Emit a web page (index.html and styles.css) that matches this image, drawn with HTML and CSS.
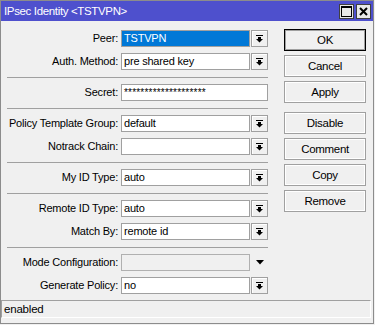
FILE: index.html
```
<!DOCTYPE html>
<html>
<head>
<meta charset="utf-8">
<link rel="stylesheet" href="styles.css">
</head>
<body>
<div class="window">
  <div class="titlebar">
    <span class="title">IPsec Identity &lt;TSTVPN&gt;</span>
    <div class="tb-buttons">
      <span class="tb-btn"><svg width="11" height="11" viewBox="0 0 11 11"><rect x="0.5" y="0.5" width="10" height="10" fill="none" stroke="#000"/><rect x="0" y="0" width="11" height="2" fill="#000"/></svg></span>
      <span class="tb-btn"><svg width="9" height="9" viewBox="0 0 9 9"><path d="M1 1L8 8M8 1L1 8" stroke="#000" stroke-width="2"/></svg></span>
    </div>
  </div>
  <div class="content">
    <div class="form">
      <div class="group">
        <div class="row"><span class="label">Peer:</span><span class="field selected">TSTVPN</span><span class="dd"><svg width="7" height="8" viewBox="0 0 7 8"><rect x="0" y="0" width="7" height="1"/><rect x="2" y="2" width="3" height="2"/><polygon points="0,4 7,4 3.5,7.5"/></svg></span></div>
        <div class="row"><span class="label">Auth. Method:</span><span class="field">pre shared key</span><span class="dd"><svg width="7" height="8" viewBox="0 0 7 8"><rect x="0" y="0" width="7" height="1"/><rect x="2" y="2" width="3" height="2"/><polygon points="0,4 7,4 3.5,7.5"/></svg></span></div>
      </div>
      <div class="sep"></div>
      <div class="group">
        <div class="row"><span class="label">Secret:</span><span class="field wide secret">********************</span></div>
      </div>
      <div class="sep"></div>
      <div class="group">
        <div class="row"><span class="label">Policy Template Group:</span><span class="field">default</span><span class="dd"><svg width="7" height="8" viewBox="0 0 7 8"><rect x="0" y="0" width="7" height="1"/><rect x="2" y="2" width="3" height="2"/><polygon points="0,4 7,4 3.5,7.5"/></svg></span></div>
        <div class="row"><span class="label">Notrack Chain:</span><span class="field"></span><span class="dd"><svg width="7" height="8" viewBox="0 0 7 8"><rect x="0" y="0" width="7" height="1"/><rect x="2" y="2" width="3" height="2"/><polygon points="0,4 7,4 3.5,7.5"/></svg></span></div>
      </div>
      <div class="sep"></div>
      <div class="group">
        <div class="row"><span class="label">My ID Type:</span><span class="field">auto</span><span class="dd"><svg width="7" height="8" viewBox="0 0 7 8"><rect x="0" y="0" width="7" height="1"/><rect x="2" y="2" width="3" height="2"/><polygon points="0,4 7,4 3.5,7.5"/></svg></span></div>
      </div>
      <div class="sep"></div>
      <div class="group">
        <div class="row"><span class="label">Remote ID Type:</span><span class="field">auto</span><span class="dd"><svg width="7" height="8" viewBox="0 0 7 8"><rect x="0" y="0" width="7" height="1"/><rect x="2" y="2" width="3" height="2"/><polygon points="0,4 7,4 3.5,7.5"/></svg></span></div>
        <div class="row"><span class="label">Match By:</span><span class="field">remote id</span><span class="dd"><svg width="7" height="8" viewBox="0 0 7 8"><rect x="0" y="0" width="7" height="1"/><rect x="2" y="2" width="3" height="2"/><polygon points="0,4 7,4 3.5,7.5"/></svg></span></div>
      </div>
      <div class="sep"></div>
      <div class="group">
        <div class="row"><span class="label">Mode Configuration:</span><span class="field disabled"></span><span class="dd plain"><svg width="8" height="5" viewBox="0 0 8 5"><polygon points="0,0 8,0 4,4.5"/></svg></span></div>
        <div class="row"><span class="label">Generate Policy:</span><span class="field">no</span><span class="dd"><svg width="7" height="8" viewBox="0 0 7 8"><rect x="0" y="0" width="7" height="1"/><rect x="2" y="2" width="3" height="2"/><polygon points="0,4 7,4 3.5,7.5"/></svg></span></div>
      </div>
    </div>
    <div class="buttons">
      <button class="btn default">OK</button>
      <button class="btn">Cancel</button>
      <button class="btn">Apply</button>
      <button class="btn spaced">Disable</button>
      <button class="btn">Comment</button>
      <button class="btn">Copy</button>
      <button class="btn">Remove</button>
    </div>
  </div>
  <div class="status">enabled</div>
</div>
</body>
</html>
```

FILE: styles.css
```
* { box-sizing: border-box; }
body {
  margin: 0;
  background: #f0f0f0;
  font-family: "Liberation Sans", Arial, sans-serif;
  font-size: 11px;
  letter-spacing: -0.2px;
  color: #000;
}
.window {
  width: 374px;
  height: 324px;
  border: 1px solid #8c8c8c;
  display: flex;
  flex-direction: column;
  background: #f0f0f0;
}
.titlebar {
  height: 20px;
  background: #4e50cd;
  color: #fff;
  display: flex;
  align-items: center;
  justify-content: space-between;
  padding: 0 2px 0 3px;
}
.title { font-size: 11.5px; letter-spacing: -0.35px; }
.tb-buttons { display: flex; gap: 2px; }
.tb-btn {
  width: 15px;
  height: 15px;
  background: #e8e8e8;
  border: 1px solid #404040;
  display: flex;
  align-items: center;
  justify-content: center;
}
.content {
  display: flex;
  align-items: flex-start;
}
.form {
  width: 267px;
  padding: 9px 0 0 6px;
}
.group {
  display: flex;
  flex-direction: column;
  gap: 6px;
}
.sep {
  height: 1px;
  background: #a0a0a0;
  margin: 7px 0 6px;
}
.row {
  display: flex;
  height: 17px;
  align-items: stretch;
}
.label {
  width: 114px;
  text-align: right;
  padding-right: 3px;
  line-height: 17px;
  white-space: nowrap;
}
.field {
  width: 129px;
  background: #fff;
  border: 1px solid #a0a0a0;
  padding: 0 2px;
  line-height: 15px;
  white-space: nowrap;
  overflow: hidden;
}
.field.wide { width: 147px; }
.field.secret { font-size: 10px; letter-spacing: 0.2px; }
.field.selected { background: #0078d7; color: #fff; }
.field.disabled { background: #f0f0f0; border-color: #b0b0b0; }
.dd {
  width: 17px;
  margin-left: 1px;
  border: 1px solid #a0a0a0;
  background: #f0f0f0;
  box-shadow: inset 1px 1px 0 #fff;
  display: flex;
  align-items: center;
  justify-content: center;
}
.dd.plain { border: 0; box-shadow: none; background: transparent; }
.buttons {
  margin-left: 16px;
  padding-top: 8px;
  display: flex;
  flex-direction: column;
  gap: 4px;
}
.btn {
  width: 82px;
  height: 22px;
  font-family: "Liberation Sans", Arial, sans-serif;
  font-size: 11.5px;
  letter-spacing: -0.3px;
  color: #000;
  background: #f0f0f0;
  border: 1px solid #a0a0a0;
  box-shadow: inset 0 0 0 1px #fff;
  padding: 0;
}
.btn.default { border-color: #000; box-shadow: inset 0 0 0 1px #a0a0a0; }
.btn.spaced { margin-top: 5px; }
.status {
  margin: 6px 2px 0 0;
  height: 18px;
  border-top: 1px solid #a0a0a0;
  border-left: 1px solid #a0a0a0;
  border-right: 1px solid #fff;
  border-bottom: 1px solid #fff;
  padding-left: 2px;
  line-height: 16px;
  font-size: 11.5px;
}
```
